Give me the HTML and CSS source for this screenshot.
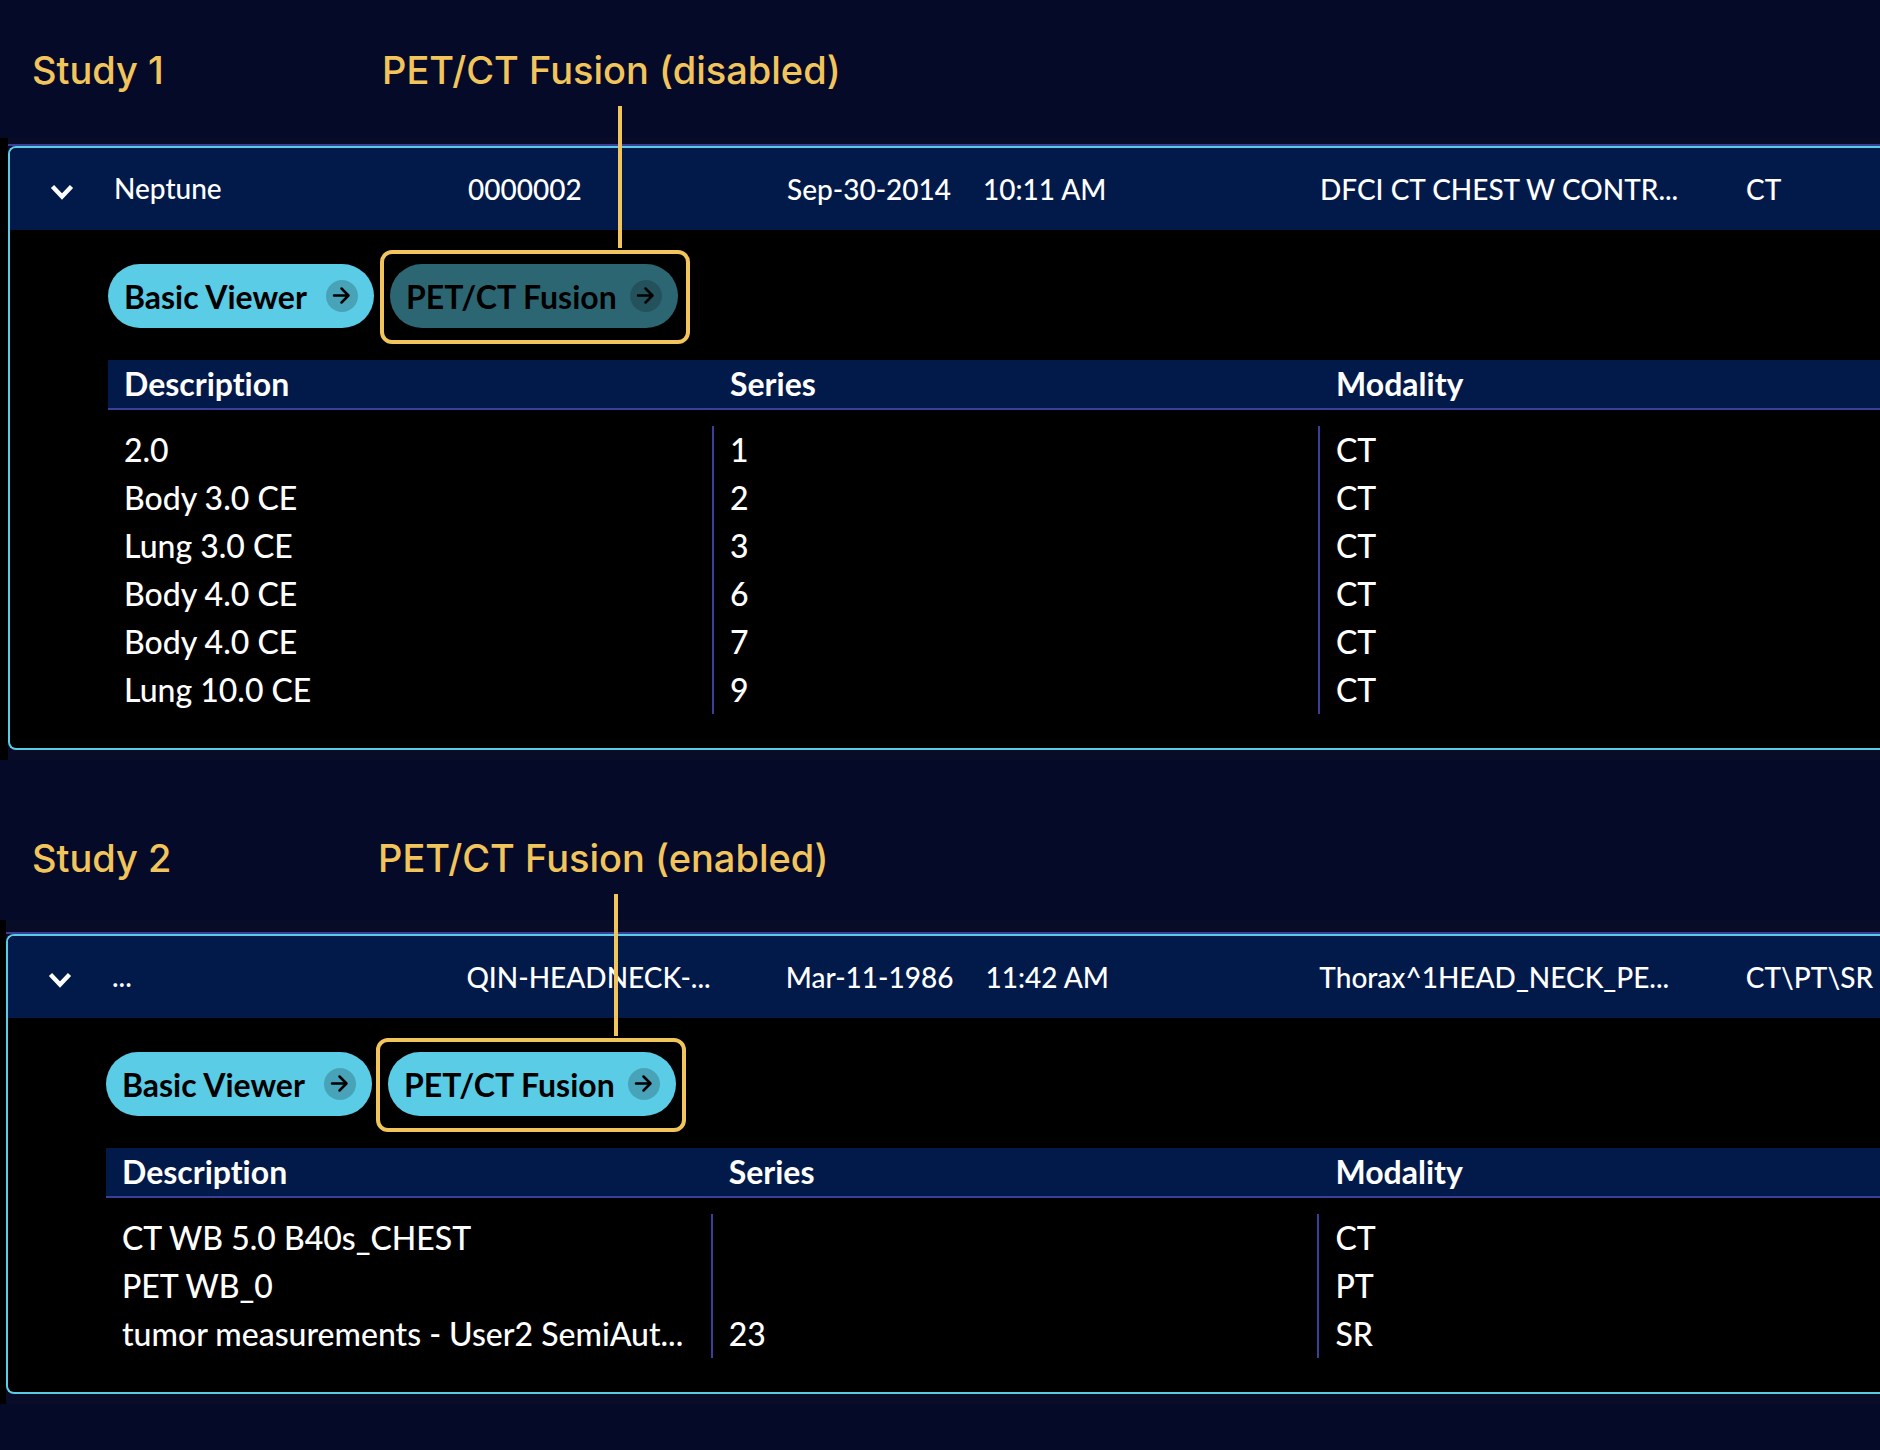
FILE: index.html
```html
<!DOCTYPE html>
<html lang="en">
<head>
  <meta charset="utf-8">
  <title>PET/CT Fusion mode</title>
  <link rel="stylesheet" href="styles.css">
</head>
<body>
  <!-- shared icons -->
  <svg class="icon-defs" aria-hidden="true">
    <symbol id="chevron" viewBox="0 0 24 16">
      <path d="M2.5 2.5 L12 12.5 L21.5 2.5" fill="none" stroke="#fff" stroke-width="4.4"/>
    </symbol>
    <symbol id="arrow" viewBox="0 0 32 32">
      <circle cx="16" cy="16" r="16" fill="#000" fill-opacity="0.2"/>
      <path d="M8 15.5 H22 M15.5 8.5 L22.5 15.5 L15.5 22.5" fill="none" stroke="#000" stroke-width="2.5" stroke-linecap="round" stroke-linejoin="round"/>
    </symbol>
  </svg>

  <section class="study study-1">
    <div class="notes">
      <h2>Study 1</h2>
      <p>PET/CT Fusion (disabled)</p>
    </div>
    <div class="list">
      <div class="row-wrap">
        <div class="card">
          <div class="summary">
            <button class="toggle" type="button" aria-label="Collapse study"><svg><use href="#chevron"/></svg></button>
            <span class="name">Neptune</span>
            <span>0000002</span>
            <span class="date"><span>Sep-30-2014</span><span>10:11 AM</span></span>
            <span>DFCI CT CHEST W CONTR...</span>
            <span>CT</span>
          </div>
          <div class="details">
            <div class="modes">
              <button class="mode" type="button">Basic Viewer <svg><use href="#arrow"/></svg></button>
              <div class="callout">
                <button class="mode" type="button" disabled>PET/CT Fusion <svg><use href="#arrow"/></svg></button>
              </div>
            </div>
            <table>
              <thead>
                <tr><th>Description</th><th>Series</th><th>Modality</th></tr>
              </thead>
              <tbody>
                <tr class="spacer"><td colspan="3"></td></tr>
                <tr><td>2.0</td><td>1</td><td>CT</td></tr>
                <tr><td>Body 3.0 CE</td><td>2</td><td>CT</td></tr>
                <tr><td>Lung 3.0 CE</td><td>3</td><td>CT</td></tr>
                <tr><td>Body 4.0 CE</td><td>6</td><td>CT</td></tr>
                <tr><td>Body 4.0 CE</td><td>7</td><td>CT</td></tr>
                <tr><td>Lung 10.0 CE</td><td>9</td><td>CT</td></tr>
              </tbody>
            </table>
          </div>
        </div>
      </div>
    </div>
  </section>

  <section class="study study-2">
    <div class="notes">
      <h2>Study 2</h2>
      <p>PET/CT Fusion (enabled)</p>
    </div>
    <div class="list">
      <div class="row-wrap">
        <div class="card">
          <div class="summary">
            <button class="toggle" type="button" aria-label="Collapse study"><svg><use href="#chevron"/></svg></button>
            <span class="name">...</span>
            <span>QIN-HEADNECK-...</span>
            <span class="date"><span>Mar-11-1986</span><span>11:42 AM</span></span>
            <span>Thorax^1HEAD_NECK_PE...</span>
            <span>CT\PT\SR</span>
          </div>
          <div class="details">
            <div class="modes">
              <button class="mode" type="button">Basic Viewer <svg><use href="#arrow"/></svg></button>
              <div class="callout">
                <button class="mode" type="button">PET/CT Fusion <svg><use href="#arrow"/></svg></button>
              </div>
            </div>
            <table>
              <thead>
                <tr><th>Description</th><th>Series</th><th>Modality</th></tr>
              </thead>
              <tbody>
                <tr class="spacer"><td colspan="3"></td></tr>
                <tr><td>CT WB 5.0 B40s_CHEST</td><td></td><td>CT</td></tr>
                <tr><td>PET WB_0</td><td></td><td>PT</td></tr>
                <tr><td>tumor measurements - User2 SemiAut...</td><td>23</td><td>SR</td></tr>
              </tbody>
            </table>
          </div>
        </div>
      </div>
    </div>
  </section>
</body>
</html>
```
FILE: styles.css
```css
* {
  box-sizing: border-box;
}

body {
  margin: 0;
  background-color: #060a29;
  color: #fff;
  font-family: Lato, sans-serif;
  font-size: 32px;
  font-weight: 500;
  font-variant-ligatures: none;
  line-height: 48px;
}

.icon-defs {
  display: none;
}

/* yellow notes above each study */
.notes {
  display: grid;
  grid-template-columns: 350px 1fr;
  padding: 46px 32px 44px;
  color: #f2c55c;
  font-family: Inter, sans-serif;
  font-size: 38px;
}

.notes h2,
.notes p {
  margin: 0;
  font-size: inherit;
  font-weight: 500;
}

.study-2 .notes {
  grid-template-columns: 346px 1fr;
  padding-top: 74px;
  padding-bottom: 38px;
}

/* study list */
.list {
  padding: 6px 0 10px;
  border-left: 8px solid #000;
  background-color: #080c26;
}

.study-2 .list {
  padding-top: 12px;
  border-left-width: 6px;
}

.row-wrap {
  border-top: 2px solid #3a3f99;
}

.card {
  border: 2px solid #5acce6;
  border-right: none;
  border-radius: 8px 0 0 8px;
  background-color: #000;
}

.summary {
  display: grid;
  grid-template-columns: 104px 354fr 319fr 533fr 426fr 134fr;
  align-items: center;
  height: 82px;
  border-radius: 6px 0 0 0;
  background-color: #021a4a;
  font-size: 28px;
  white-space: nowrap;
}

.name {
  padding-bottom: 2px;
}

.toggle {
  display: flex;
  width: 104px;
  padding: 6px 40px 0;
  border: none;
  background: none;
  cursor: pointer;
}

.toggle svg {
  width: 24px;
  height: 16px;
}

.date {
  display: flex;
  gap: 32px;
}

.details {
  padding: 34px 0 34px 98px;
}

.modes {
  display: flex;
  gap: 16px;
  margin-bottom: 32px;
}

.mode {
  display: flex;
  align-items: center;
  justify-content: space-between;
  width: 266px;
  height: 64px;
  padding: 0 16px;
  border: none;
  border-radius: 32px;
  background-color: #5acce6;
  color: #000;
  font-family: inherit;
  font-size: 32px;
  font-weight: 700;
  white-space: nowrap;
  cursor: pointer;
}

.mode:disabled {
  opacity: 0.5;
  cursor: default;
}

.mode svg {
  width: 32px;
  height: 32px;
}

/* highlight box and the line up to its note */
.callout {
  position: relative;
}

.callout .mode {
  width: 288px;
}

.callout::before {
  content: "";
  position: absolute;
  top: -14px;
  right: -12px;
  bottom: -16px;
  left: -10px;
  border: 4px solid #f2c55c;
  border-radius: 12px;
  pointer-events: none;
}

.study-2 .callout::before {
  right: -10px;
  left: -12px;
}

.callout::after {
  content: "";
  position: absolute;
  bottom: 80px;
  left: 228px;
  width: 4px;
  height: 142px;
  background-color: #f2c55c;
}

.study-2 .callout::after {
  left: 226px;
}

table {
  width: 100%;
  border-spacing: 0;
  table-layout: fixed;
}

th,
td {
  height: 48px;
  padding: 0 16px;
  text-align: left;
  white-space: nowrap;
}

th {
  height: 50px;
  border-bottom: 2px solid #3a3f99;
  background-color: #021a4a;
  font-weight: 700;
}

th:nth-child(1),
th:nth-child(2) {
  width: 34.2%;
}

td:nth-child(1),
td:nth-child(2) {
  border-right: 2px solid #3a3f99;
}

.spacer td {
  height: 16px;
  padding: 0;
  border: none;
}
```
